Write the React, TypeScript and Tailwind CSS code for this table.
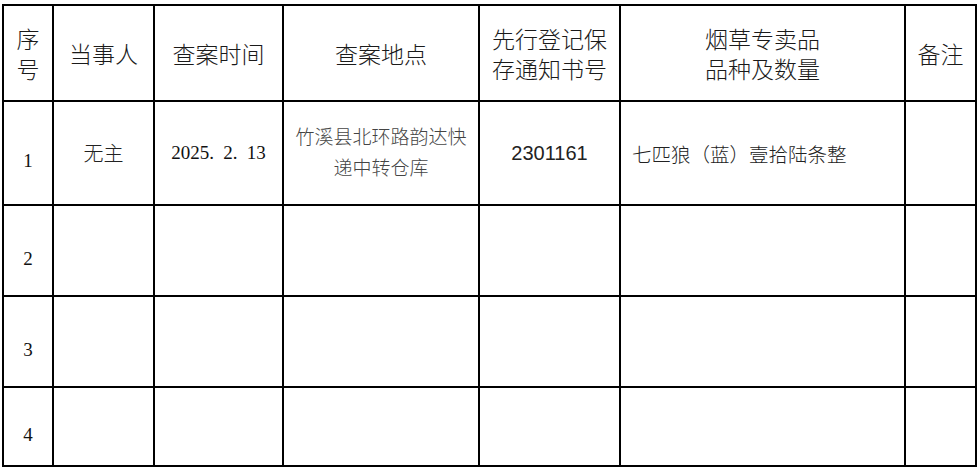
import React from "react";

const cjk = "font-['Noto_Sans_CJK_SC','Noto_Sans',sans-serif]";
const serif = "font-['Liberation_Serif','Noto_Sans_CJK_SC',serif]";

function Cell({ children, className = "" }: { children?: React.ReactNode; className?: string }) {
  return <div className={`bg-white flex items-center justify-center ${className}`}>{children}</div>;
}

function NumCell({ n }: { n: string }) {
  return <Cell className={`${serif} text-[19px] text-[#111] pt-[17px]`}>{n}</Cell>;
}

function Lines({ lines }: { lines: string[] }) {
  return (
    <div className="flex flex-col items-center">
      {lines.map((l) => (
        <div key={l} className="h-[30px] flex items-center whitespace-nowrap">
          {l}
        </div>
      ))}
    </div>
  );
}

export default function App() {
  const head = `${cjk} font-light text-[23px] text-[#1a1a1a] text-center`;
  return (
    <div className="w-[980px] h-[469px] bg-white pt-[4px] pl-[2px]">
      <div className="grid w-fit grid-cols-[48px_99px_127px_194px_139px_283px_69px] grid-rows-[94px_102px_89px_89px_77px] gap-[2px] bg-black p-[2px]">
        {/* header */}
        <Cell className={head}>
          <Lines lines={["序", "号"]} />
        </Cell>
        <Cell className={head}>当事人</Cell>
        <Cell className={head}>查案时间</Cell>
        <Cell className={head}>查案地点</Cell>
        <Cell className={head}>
          <Lines lines={["先行登记保", "存通知书号"]} />
        </Cell>
        <Cell className={head}>
          <Lines lines={["烟草专卖品", "品种及数量"]} />
        </Cell>
        <Cell className={head}>备注</Cell>

        {/* row 1 */}
        <NumCell n="1" />
        <Cell className={`${cjk} font-light text-[20px] text-[#222]`}>无主</Cell>
        <Cell className={`${serif} text-[19px] text-[#111]`}>
          <span>2025</span>
          <span className="inline-block w-[14px]">.</span>
          <span>2</span>
          <span className="inline-block w-[14px]">.</span>
          <span>13</span>
        </Cell>
        <Cell className={`${cjk} font-light text-[19px] text-[#444] text-center pb-[2px]`}>
          <div className="flex flex-col items-center">
            <div className="h-[31px] flex items-center whitespace-nowrap">竹溪县北环路韵达快</div>
            <div className="h-[31px] flex items-center whitespace-nowrap">递中转仓库</div>
          </div>
        </Cell>
        <Cell className="font-['Liberation_Sans',sans-serif] text-[20px] text-[#222]">2301161</Cell>
        <Cell className={`${cjk} font-light text-[19.5px] text-[#222] !justify-start pl-[11px] pt-[2px]`}>
          七匹狼（蓝）壹拾陆条整
        </Cell>
        <Cell />

        {/* row 2-4 */}
        {["2", "3", "4"].map((n) => (
          <React.Fragment key={n}>
            <NumCell n={n} />
            <Cell />
            <Cell />
            <Cell />
            <Cell />
            <Cell />
            <Cell />
          </React.Fragment>
        ))}
      </div>
    </div>
  );
}
